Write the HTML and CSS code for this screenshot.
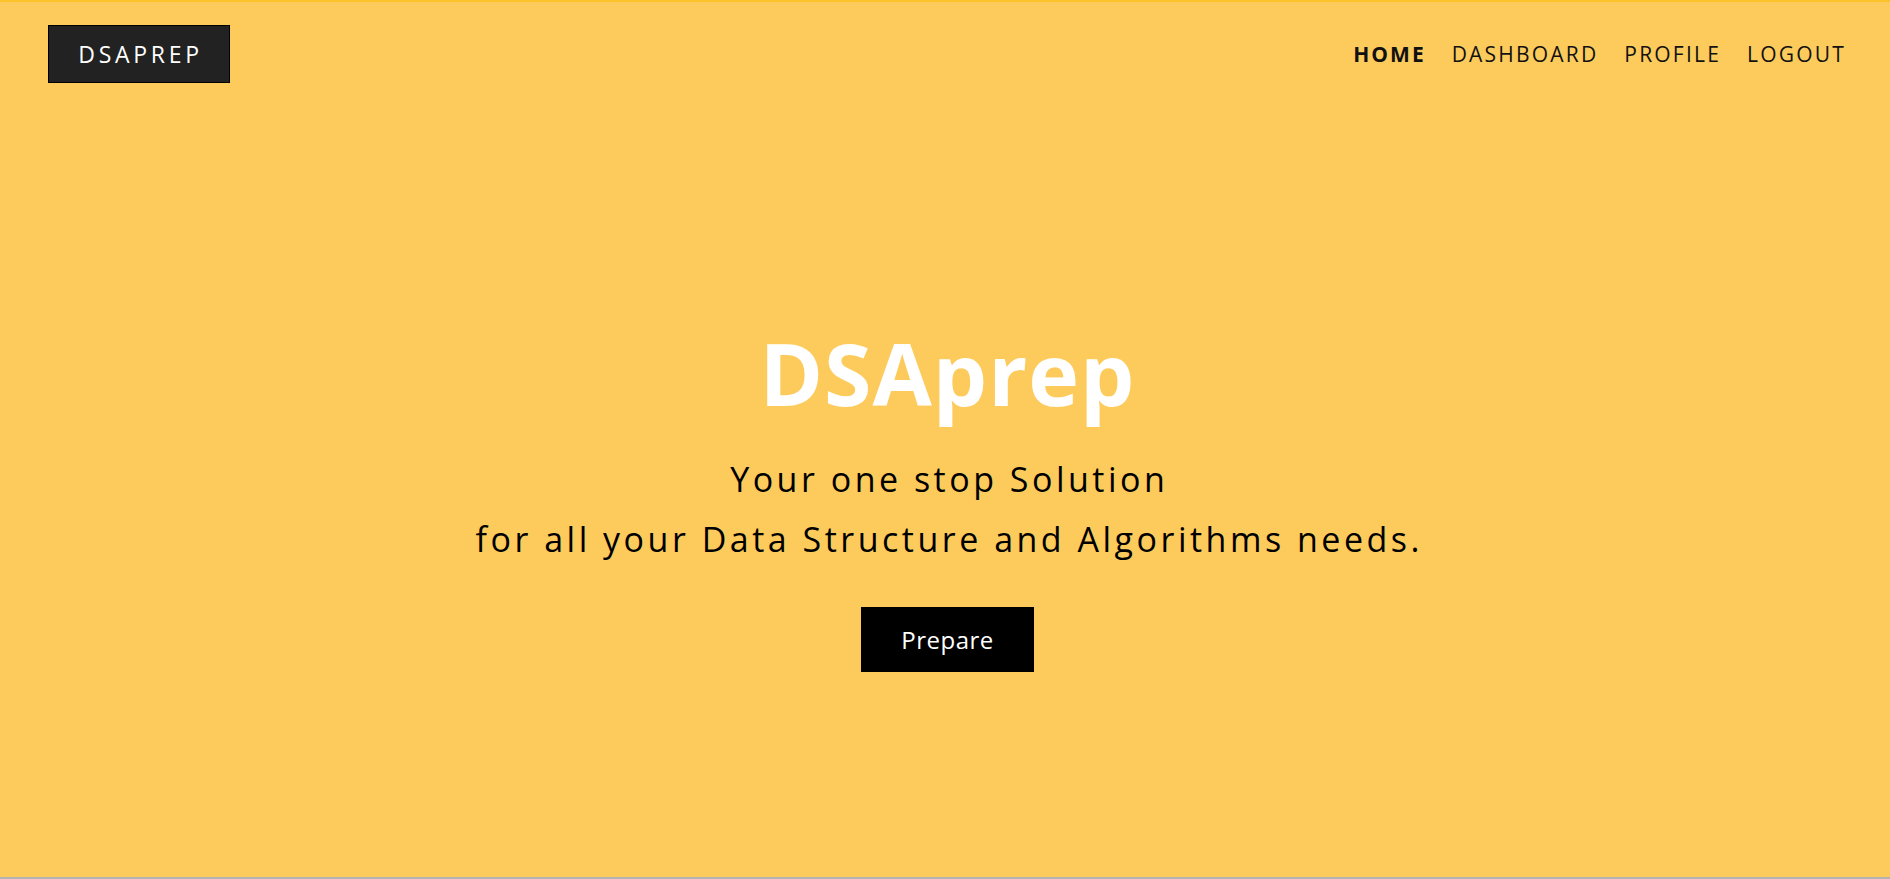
FILE: index.html
```html
<!DOCTYPE html>
<html lang="en">
<head>
<meta charset="utf-8">
<title>DSAprep</title>
<link rel="stylesheet" href="styles.css">
</head>
<body>
<div class="page">
  <header class="navbar">
    <a class="logo" href="#">DSAPREP</a>
    <nav class="menu">
      <a class="menu-link active" href="#">HOME</a>
      <a class="menu-link" href="#">DASHBOARD</a>
      <a class="menu-link" href="#">PROFILE</a>
      <a class="menu-link" href="#">LOGOUT</a>
    </nav>
  </header>
  <main class="hero">
    <h1 class="hero-title">DSAprep</h1>
    <p class="hero-text first">Your one stop Solution</p>
    <p class="hero-text">for all your Data Structure and Algorithms needs.</p>
    <a class="hero-btn" href="#">Prepare</a>
  </main>
</div>
</body>
</html>
```
FILE: styles.css
```css
html, body {
  margin: 0;
  padding: 0;
}
body {
  background: #b3b3b3;
  font-family: "Open Sans", "Liberation Sans", sans-serif;
}
.page {
  height: 877px;
  background: #fdcb5c;
  border-top: 2px solid #fcc22c;
  box-sizing: border-box;
  display: flex;
  flex-direction: column;
}
.navbar {
  display: flex;
  justify-content: space-between;
  align-items: center;
  padding: 23px 44px 0 48px;
}
.logo {
  display: flex;
  align-items: center;
  justify-content: center;
  width: 182px;
  height: 58px;
  box-sizing: border-box;
  background: #222222;
  border: 1px solid #000;
  color: #fff;
  text-decoration: none;
  font-size: 23px;
  letter-spacing: 3.7px;
  padding-left: 3px;
}
.menu {
  display: flex;
  gap: 26px;
}
.menu-link {
  color: #111;
  text-decoration: none;
  font-size: 21px;
  letter-spacing: 2.2px;
}
.menu-link.active {
  font-weight: 700;
  letter-spacing: 2px;
}
.hero {
  flex: 1;
  display: flex;
  flex-direction: column;
  align-items: center;
  padding-top: 240px;
  padding-left: 5px;
}
.hero-title {
  margin: 0;
  color: #fff;
  font-size: 86px;
  font-weight: 700;
  line-height: 100px;
  letter-spacing: 1px;
}
.hero-text {
  margin: 0;
  color: #000;
  font-size: 34px;
  letter-spacing: 3.5px;
  line-height: 60px;
  padding-left: 3.5px;
}
.hero-text.first {
  margin-top: 26px;
}
.hero-btn {
  margin-top: 38px;
  width: 173px;
  height: 65px;
  display: flex;
  align-items: center;
  justify-content: center;
  background: #000;
  color: #fff;
  text-decoration: none;
  font-size: 24px;
  letter-spacing: 0.5px;
}
```
